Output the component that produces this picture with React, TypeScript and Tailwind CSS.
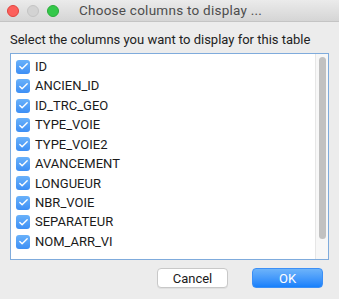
import { Check } from 'lucide-react';

const columns = [
  'ID',
  'ANCIEN_ID',
  'ID_TRC_GEO',
  'TYPE_VOIE',
  'TYPE_VOIE2',
  'AVANCEMENT',
  'LONGUEUR',
  'NBR_VOIE',
  'SEPARATEUR',
  'NOM_ARR_VI',
];

function CheckBox() {
  return (
    <div className="w-[14px] h-[14px] rounded-[3px] bg-gradient-to-b from-[#69b1fa] to-[#3d8ff5] flex items-center justify-center shrink-0">
      <Check size={11} strokeWidth={3} className="text-white" />
    </div>
  );
}

export default function App() {
  return (
    <div className="w-[339px] h-[299px] bg-[#ececec] flex flex-col font-['Roboto',sans-serif] text-[#1a1a1a] overflow-hidden">
      {/* Title bar */}
      <div className="h-[22px] bg-gradient-to-b from-[#ebebeb] to-[#d5d5d5] border-b border-[#c4c4c4] flex items-center relative shrink-0">
        <div className="flex items-center gap-[8px] pl-[7px]">
          <div className="w-[12px] h-[12px] rounded-full bg-[#fc605c] border border-[#e0443e]" />
          <div className="w-[12px] h-[12px] rounded-full bg-[#d3d3d3] border border-[#c4c4c4]" />
          <div className="w-[12px] h-[12px] rounded-full bg-[#34c84a] border border-[#2aac3a]" />
        </div>
        <div className="ml-[20px] text-[13.5px] text-[#4d4d4d] tracking-[0.25px]">Choose columns to display ...</div>
      </div>

      {/* Body */}
      <div className="px-[10px] pt-[10px] flex flex-col">
        <div className="text-[13px] h-[16px] leading-[16px] text-[#222]">Select the columns you want to display for this table</div>
        <div className="mt-[5px] h-[207px] bg-white border border-[#7fabdc] flex">
          <div className="flex-1 pt-[3px] pl-[5px]">
            {columns.map((c) => (
              <div key={c} className="h-[19.45px] flex items-center gap-[5px]">
                <CheckBox />
                <span className="text-[13px] text-[#1a1a1a]">{c}</span>
              </div>
            ))}
          </div>
          <div className="w-[13px] border-l border-[#e6e6e6] bg-[#f7f7f7] flex justify-center pt-[3px] pb-[20px]">
            <div className="w-[7px] h-full rounded-full bg-[#c1c1c1]" />
          </div>
        </div>
        <div className="mt-[8px] flex justify-end gap-[24px] pr-[6px]">
          <button className="w-[71px] h-[20px] bg-white border border-[#c8c8c8] rounded-[4px] text-[13px] leading-none shadow-[0_1px_0_rgba(0,0,0,0.05)]">
            Cancel
          </button>
          <button className="w-[71px] h-[20px] rounded-[4px] bg-gradient-to-b from-[#6cb3fa] to-[#1580fb] border border-[#3b8ff6] text-white text-[13px] leading-none">
            OK
          </button>
        </div>
      </div>
    </div>
  );
}
